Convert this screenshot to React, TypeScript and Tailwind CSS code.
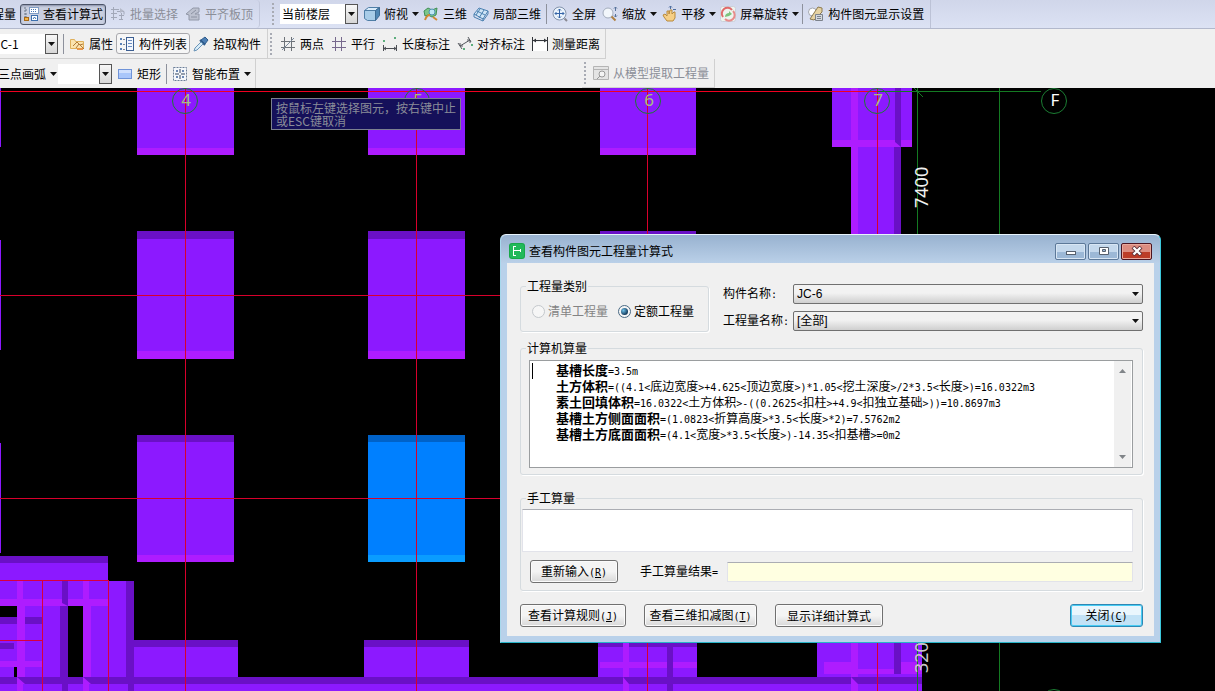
import React from 'react';
import clsx from 'clsx';

type IconProps = { children: React.ReactNode };

const Icon: React.FC<IconProps> = ({ children }) => (
  <svg width="16" height="16" viewBox="0 0 16 16" fill="none" className="shrink-0" aria-hidden="true">
    {children}
  </svg>
);

const icons = {
  formula: (
    <Icon>
      <path d="M2 1v10M2 4h3M2 8h3M2 11h3" stroke="#6b7686" strokeDasharray="2 1" />
      <rect x="6.5" y="1.5" width="9" height="6" fill="#fff" stroke="#7f9cc4" />
      <path d="M8 3.5h1M10 3.5h1M12 3.5h1M8 5.5h1M10 5.5h1M12 5.5h1" stroke="#4a78b8" />
      <rect x="1.5" y="11.5" width="4" height="3" fill="#f4b54a" stroke="#a86a18" />
      <rect x="8.5" y="9.5" width="6" height="5" fill="#fff" stroke="#3c6fae" />
      <path d="M10 13l1.5-2 1.5 2" stroke="#3c6fae" />
    </Icon>
  ),
  batch: (
    <Icon>
      <path d="M1 3.5h8M1 7.5h6M1 11.5h6M3.5 1v13M7 5.5h7v3M9 9.5h5M11.5 7v7M9 13.5h4" stroke="#a2a8b8" />
      <path d="M10 2l4 3-4 2z" fill="#b4b9c8" />
    </Icon>
  ),
  alignTop: (
    <Icon>
      <path d="M1 8l7-6h6v4l-4 2h4v6H4V9z" fill="#bcc1cf" stroke="#9298a8" />
      <path d="M6 8l5-4M6 11h6" stroke="#8c92a2" />
    </Icon>
  ),
  cube: (
    <Icon>
      <path d="M.5 4.5l4-3h11l-4 3z" fill="#d8ebfa" stroke="#4f7ea6" />
      <path d="M.5 4.5h11v10h-8l-3-2z" fill="#a8cce8" stroke="#4f7ea6" />
      <path d="M11.5 4.5l4-3v8l-4 5z" fill="#4f86b4" stroke="#3e6c94" />
    </Icon>
  ),
  orbit: (
    <Icon>
      <path d="M1 5l4-3 4 2 5-2-1 7-4 2-4-2-3 1z" fill="#7cc68a" stroke="#3f8f56" />
      <circle cx="9" cy="6" r="3" fill="#bfe6f4" stroke="#4d92ac" />
      <path d="M2 14c1-3 3-5 5-5M10 11l4 3" stroke="#d08a32" strokeWidth="2" />
    </Icon>
  ),
  partial: (
    <Icon>
      <path d="M1 8l5-6 9 3-5 8z" fill="#cfe4f6" stroke="#4a80b0" />
      <path d="M4 5l8 4M7 3l-4 6M11 4l-5 8M1 8v3l9 4v-3M10 15l5-7V5" stroke="#4a80b0" />
    </Icon>
  ),
  fullscreen: (
    <Icon>
      <circle cx="7.5" cy="7.5" r="6.5" fill="#eaf3fc" stroke="#8494ac" />
      <path d="M7.5 3v9M3 7.5h9M6 4.5l1.5-1.5L9 4.5M6 10.5L7.5 12 9 10.5M4.5 6L3 7.5 4.5 9M10.5 6L12 7.5 10.5 9" stroke="#3565a8" />
      <path d="M12.5 12.5L15 15" stroke="#8a8a92" strokeWidth="2" />
    </Icon>
  ),
  zoom: (
    <Icon>
      <circle cx="6" cy="7" r="5" fill="#f2f6fb" stroke="#a4adbd" />
      <path d="M9.5 10.5l4 4" stroke="#b08040" strokeWidth="2" />
      <path d="M13.5 1v4M12 2.5L13.5 1 15 2.5M13.5 8v3M12 9.5l1.5 1.5L15 9.5" stroke="#58739a" />
    </Icon>
  ),
  pan: (
    <Icon>
      <path d="M2 9l2-1 2 2V5h2v3l1-4h2v4l2-2h1v6l-2 3H6l-3-4z" fill="#f6cf86" stroke="#b98a3c" />
      <path d="M9.5 0v3M8 1.5L9.5 0 11 1.5M12 3.5h3" stroke="#4f6fa0" />
    </Icon>
  ),
  rotate: (
    <Icon>
      <rect x=".5" y=".5" width="15" height="15" rx="2" fill="#eef4ee" stroke="#ccd0da" />
      <path d="M3 11a5.500 5.500 0 0 1 9-7" stroke="#e06a6a" strokeWidth="2" />
      <path d="M13 5a5.500 5.500 0 0 1-8 8" stroke="#e88c8c" strokeWidth="2" />
      <path d="M5 11c0-3 2-4 4-4V5l3 3-3 2" fill="#7cc47c" />
    </Icon>
  ),
  display: (
    <Icon>
      <circle cx="4.500" cy="6" r="4" fill="#fff" stroke="#a4a8b0" />
      <path d="M2 13l8-12 4 1v4l-8 8z" fill="#e6d2a2" stroke="#8c7a50" />
      <path d="M7.500 14.500v-6h7v6z" fill="#d4d8de" stroke="#7c828c" />
      <path d="M9 10.500h4M9 12.500h4" stroke="#7c828c" />
    </Icon>
  ),
  property: (
    <Icon>
      <path d="M1.500 3.500h4l1 2h8v7h-13z" fill="#fbe3ae" stroke="#dfb05c" />
      <path d="M4 10l4-4 3 3 3-1M7 12l3-4 5 5" stroke="#b07a3a" />
      <path d="M8 13h6" stroke="#e8964a" strokeWidth="2" />
    </Icon>
  ),
  list: (
    <Icon>
      <path d="M1 2h2v2H1zM1 7h2v2H1zM1 12h2v2H1z" fill="#5a82b8" />
      <path d="M4 3.500h2M4 8.500h2M4 13.500h2" stroke="#7a8798" />
      <rect x="7.500" y="1.500" width="7" height="13" fill="#f4f8fd" stroke="#3d5f92" />
      <path d="M9 4.500h4M9 7.500h4M9 10.500h4" stroke="#6b8cc0" />
    </Icon>
  ),
  picker: (
    <Icon>
      <path d="M8 4l4-3 3 3-3 4z" fill="#4d7fb4" stroke="#2f5c8c" />
      <path d="M7 4l5 5" stroke="#2f5c8c" strokeWidth="2" />
      <path d="M8 6l-6 6-1 3 3-1 6-6z" fill="#d8ecf8" stroke="#6a94b8" />
    </Icon>
  ),
  twoPoint: (
    <Icon>
      <path d="M4.500 1v14M11.500 1v14M1 5.500h14M1 11.500h14" stroke="#6d7278" />
      <path d="M2 14L14 2" stroke="#7a8a9c" />
    </Icon>
  ),
  parallel: (
    <Icon>
      <path d="M4.500 1v14M10.500 1v14M1 5.500h14M1 11.500h14" stroke="#76688c" />
    </Icon>
  ),
  length: (
    <Icon>
      <path d="M1.500 9v6M14.500 9v6M2 12.500h12M4 11l-2 1.500L4 14M12 11l2 1.500-2 1.500" stroke="#4c4f55" />
      <path d="M1 4h2v2H1zM12 1h2v2h-2z" fill="#5cae7c" />
    </Icon>
  ),
  aligned: (
    <Icon>
      <path d="M1 7l4 6M11 1l3 5M3 10l10-6M3 7v3h3M10 4h3v3" stroke="#55585e" />
      <path d="M6 12h2v2H6zM14 8h2v2h-2z" fill="#5cae7c" />
    </Icon>
  ),
  measure: (
    <Icon>
      <path d="M1 6h14v9H1z" fill="#fff" />
      <path d="M.500 1v14M15.500 1v14M1 4.500h14" stroke="#33363b" />
      <path d="M1 4.500l3-2v4zM15 4.500l-3-2v4z" fill="#33363b" />
    </Icon>
  ),
  rect: (
    <Icon>
      <rect x="1.500" y="3.500" width="13" height="9" fill="#a9c6fa" stroke="#6f93d8" />
      <path d="M2 4h12v3H2z" fill="#cfdffd" />
    </Icon>
  ),
  smart: (
    <Icon>
      <rect x="1.500" y="1.500" width="13" height="13" fill="#f4f7fb" stroke="#6c7f98" strokeDasharray="2 1" />
      <path d="M8 3v4M8 9v4M3 8h4M9 8h4" stroke="#34445c" />
      <path d="M4 4h2v2H4zM10 4h2v2h-2zM4 10h2v2H4zM10 10h2v2h-2z" fill="#6c88b4" />
    </Icon>
  ),
  extract: (
    <Icon>
      <path d="M.500 1.500h15v13H.500z" fill="#e4e4e4" stroke="#b4b4b4" />
      <path d="M1 4.500h14" stroke="#b4b4b4" />
      <circle cx="9" cy="9" r="3" fill="#f4f4f4" stroke="#999" />
      <path d="M7 11l-3 3" stroke="#999" />
    </Icon>
  ),
};

const Caret: React.FC = () => (
  <svg width="7" height="4" viewBox="0 0 7 4" className="shrink-0" aria-hidden="true">
    <path d="M0 0h7L3.5 4z" fill="#111" />
  </svg>
);

interface ToolProps {
  icon?: React.ReactNode;
  label: string;
  caret?: boolean;
  disabled?: boolean;
  look?: 'plain' | 'pressed' | 'outlined';
}

const Tool: React.FC<ToolProps> = ({ icon, label, caret, disabled, look = 'plain' }) => (
  <button
    type="button"
    disabled={disabled}
    className={clsx(
      'flex h-[21px] shrink-0 items-center gap-1 rounded-[3px] border pl-[2px] whitespace-nowrap disabled:text-[#8b8e98]',
      caret ? 'pr-0' : 'pr-[2px]',
      look === 'plain' && 'border-transparent',
      look === 'pressed' && 'border-[#4c5468] bg-[#c9cfe0] shadow-[inset_0_1px_2px_#8890a8]',
      look === 'outlined' && 'border-[#a9a9ad] bg-[#f6f6f6]'
    )}
  >
    {icon}
    <span>{label}</span>
    {caret && <Caret />}
  </button>
);

const Separator: React.FC = () => <span className="mx-[2px] h-[20px] w-px shrink-0 bg-[#8d919c]" />;

const Grip: React.FC = () => (
  <span className="mr-1 ml-[2px] h-[22px] w-[2px] shrink-0 bg-[repeating-linear-gradient(#a8abb4_0_2px,transparent_2px_4px)]" />
);

const ToolSelect: React.FC<{ label: string; value: string; className: string }> = ({ label, value, className }) => (
  <div className={clsx('relative flex h-[20px] shrink-0 justify-end overflow-hidden bg-white', className)}>
    <select aria-label={label} className="h-full w-full shrink-0 appearance-none bg-white px-[2px] outline-none">
      <option>{value}</option>
    </select>
    <span className="pointer-events-none absolute inset-y-0 right-0 flex w-[13px] items-center justify-center border border-[#555] bg-linear-to-b from-[#f8f8f8] to-[#d6d6d6]">
      <Caret />
    </span>
  </div>
);

const Toolbars: React.FC = () => (
  <header className="bg-[#f0f0f0]">
    <div className="flex h-[29px] overflow-hidden border-b border-[#b2b8cc] bg-linear-to-b from-[#d0d6ea] to-[#dce2f4]">
      <div className="flex items-center gap-px rounded-r border-r border-[#c2c8dc] pr-[3px]">
        <button type="button" className="mr-[3px] flex w-4 shrink-0 justify-end overflow-hidden whitespace-nowrap">
          <span className="shrink-0">工程量</span>
        </button>
        <Tool icon={icons.formula} label="查看计算式" look="pressed" />
        <Tool icon={icons.batch} label="批量选择" disabled />
        <Tool icon={icons.alignTop} label="平齐板顶" disabled />
      </div>
      <div className="ml-[10px] flex items-center border-r border-[#bcc2d6] pr-[3px]">
        <Grip />
        <ToolSelect label="楼层范围" value="当前楼层" className="mr-[3px] ml-[2px] w-[78px]" />
        <Tool icon={icons.cube} label="俯视" caret />
        <Tool icon={icons.orbit} label="三维" />
        <Tool icon={icons.partial} label="局部三维" />
        <Separator />
        <Tool icon={icons.fullscreen} label="全屏" />
        <Tool icon={icons.zoom} label="缩放" caret />
        <Tool icon={icons.pan} label="平移" caret />
        <Tool icon={icons.rotate} label="屏幕旋转" caret />
        <Separator />
        <Tool icon={icons.display} label="构件图元显示设置" />
      </div>
    </div>
    <div className="flex h-[30px] overflow-hidden">
      <div className="flex items-center border-r border-b border-[#d0d0d0] pr-[3px]">
        <div className="mr-[3px] flex w-[58px] shrink-0 justify-end overflow-hidden">
          <ToolSelect label="构件" value="JC-1" className="w-[66px]" />
        </div>
        <Separator />
        <Tool icon={icons.property} label="属性" />
        <Tool icon={icons.list} label="构件列表" look="outlined" />
        <Tool icon={icons.picker} label="拾取构件" />
      </div>
      <div className="flex items-center gap-px border-r border-b border-[#d0d0d0] pr-[2px]">
        <Grip />
        <Tool icon={icons.twoPoint} label="两点" />
        <Tool icon={icons.parallel} label="平行" />
        <Tool icon={icons.length} label="长度标注" />
        <Tool icon={icons.aligned} label="对齐标注" />
        <Tool icon={icons.measure} label="测量距离" />
      </div>
    </div>
    <div className="flex h-[29px] overflow-hidden">
      <div className="flex items-center border-r border-[#d0d0d0] pr-[3px]">
        <div className="flex w-[58px] shrink-0 justify-end overflow-hidden">
          <Tool label="三点画弧" caret />
        </div>
        <ToolSelect label="画弧方式" value="" className="mr-[2px] w-[54px]" />
        <Tool icon={icons.rect} label="矩形" />
        <Separator />
        <Tool icon={icons.smart} label="智能布置" caret />
      </div>
      <div className="ml-[326px] flex items-center border-r border-b border-[#d0d0d0] pr-[2px]">
        <Grip />
        <Tool icon={icons.extract} label="从模型提取工程量" disabled />
      </div>
    </div>
  </header>
);

const BODY = '#8c19ff';
const DARK = '#6a10c6';
const LIGHT = '#ae1cff';

// x, y, width, height, fill
type Block = [number, number, number, number, string];

const blocks: Block[] = [
  // slivers cut off by the left edge
  [0, 88, 1, 59, BODY],
  [0, 240, 1, 110, BODY],
  [0, 443, 1, 110, BODY],
  // top row
  [137, 88, 97, 67, BODY],
  [137, 148, 97, 7, LIGHT],
  [368, 88, 97, 67, BODY],
  [368, 148, 97, 7, LIGHT],
  [600, 88, 96, 67, BODY],
  [600, 148, 96, 7, LIGHT],
  // second row
  [137, 231, 97, 128, BODY],
  [137, 231, 97, 8, DARK],
  [137, 351, 97, 8, LIGHT],
  [368, 231, 97, 128, BODY],
  [368, 231, 97, 8, DARK],
  [368, 351, 97, 8, LIGHT],
  [600, 231, 96, 128, DARK],
  // third row
  [137, 435, 97, 127, BODY],
  [137, 435, 97, 7, DARK],
  [137, 555, 97, 7, LIGHT],
  [368, 435, 97, 127, '#0080ff'],
  [368, 435, 97, 7, '#0062c8'],
  [368, 555, 97, 7, '#0a9cff'],
  // axis 7
  [832, 88, 80, 59, BODY],
  [832, 140, 80, 7, LIGHT],
  [851, 147, 50, 90, BODY],
  [851, 88, 7, 149, LIGHT],
  [895, 88, 6, 54, DARK],
  [894, 147, 7, 90, DARK],
  // bottom left cluster
  [0, 556, 108, 25, BODY],
  [0, 556, 108, 7, DARK],
  [0, 581, 134, 110, BODY],
  [126, 581, 8, 110, DARK],
  [134, 640, 104, 51, BODY],
  [134, 640, 104, 7, DARK],
  [364, 640, 105, 51, BODY],
  [364, 640, 105, 7, DARK],
  [598, 640, 99, 51, BODY],
  [598, 640, 99, 7, DARK],
  [817, 640, 105, 51, BODY],
  [0, 677, 922, 14, BODY],
  [0, 677, 922, 7, DARK],
  [0, 599, 108, 7, LIGHT],
  [62, 581, 6, 22, DARK],
  [68, 606, 15, 71, '#000'],
  [60, 606, 8, 71, DARK],
  [62, 677, 6, 14, DARK],
  [0, 606, 17, 11, '#000'],
  [0, 617, 42, 7, DARK],
  [0, 643, 14, 6, DARK],
  [0, 661, 42, 6, LIGHT],
  [14, 667, 3, 10, '#000'],
  [17, 581, 6, 25, LIGHT],
  [17, 606, 8, 71, LIGHT],
  [17, 684, 6, 7, LIGHT],
  [83, 581, 6, 25, LIGHT],
  [83, 606, 8, 71, LIGHT],
  [83, 684, 6, 7, LIGHT],
  [128, 677, 6, 14, DARK],
  // bottom of axis 6 and 7
  [600, 662, 97, 6, LIGHT],
  [623, 643, 6, 34, LIGHT],
  [623, 684, 6, 7, LIGHT],
  [667, 647, 6, 44, DARK],
  [824, 662, 98, 12, LIGHT],
  [858, 662, 36, 7, BODY],
  [851, 643, 7, 34, LIGHT],
  [851, 684, 7, 7, LIGHT],
  [894, 643, 7, 31, DARK],
];

const gridLines: Block[] = [
  [0, 91, 877, 1, '#f00020'],
  [0, 295, 500, 1, '#d8002c'],
  [0, 498, 500, 1, '#d8002c'],
  [185, 88, 1, 603, '#d8002c'],
  [416, 88, 1, 603, '#d8002c'],
  [647, 88, 1, 603, '#d8002c'],
  [877, 88, 1, 603, '#d8002c'],
  [0, 580, 109, 1, '#d8003c'],
  [0, 640, 43, 1, '#d8003c'],
  [42, 581, 1, 110, '#d8003c'],
  [108, 581, 1, 110, '#d8003c'],
  [877, 91, 164, 1, '#147a22'],
  [917, 88, 1, 603, '#147a22'],
  [999, 88, 1, 603, '#147a22'],
];

const axes = [
  { x: 185, label: '4', color: '#a8c07c' },
  { x: 417, label: '5', color: '#a8c07c' },
  { x: 648, label: '6', color: '#a8c07c' },
  { x: 877, label: '7', color: '#a8c07c' },
  { x: 1054, label: 'F', color: '#ffffff' },
];

const Drawing: React.FC = () => (
  <svg className="absolute inset-0 h-full w-full font-['Noto_Sans',sans-serif]" aria-label="基础平面图">
    {/* plan coordinates are measured from the window top */}
    <g transform="translate(0 -88)">
      {blocks.map(([x, y, w, h, fill], i) => (
        <rect key={i} x={x} y={y} width={w} height={h} fill={fill} />
      ))}
      <path d="M895 142h6v5zM62 603h6v3zM667 668h6v-6z" fill={DARK} />
      <path d="M17 677l8 7h-8zM83 677l8 7h-8zM17 617l8 7h-8zM623 677l6 7h-6zM851 677l7 7h-7z" fill={LIGHT} />
      {gridLines.map(([x, y, w, h, fill], i) => (
        <rect key={i} x={x} y={y} width={w} height={h} fill={fill} />
      ))}
      <path d="M914 88l9 9" stroke="#147a22" />
      {axes.map((axis) => (
        <g key={axis.label}>
          <circle cx={axis.x} cy="101" r="12.5" fill="none" stroke="#1b7d33" />
          <text x={axis.x + 1} y="106" fontSize="17" textAnchor="middle" fill={axis.color}>
            {axis.label}
          </text>
        </g>
      ))}
      <circle cx="1054" cy="702" r="12.5" fill="none" stroke="#1b7d33" />
      <text transform="translate(928 208) rotate(-90)" fontSize="18" fill="#f0f0f0">
        7400
      </text>
      <text transform="translate(928 673) rotate(-90)" fontSize="18" fill="#c8c8c8">
        3200
      </text>
    </g>
  </svg>
);

// Half-width characters take half the width of a 12px ideograph
const Mixed: React.FC<{ text: string }> = ({ text }) => (
  <>
    {text.split(/([\x20-\x7e]+)/).map((run, i) =>
      i % 2 ? (
        <span key={i} className="font-['DejaVu_Sans_Mono',monospace] text-[10px] whitespace-pre">
          {run}
        </span>
      ) : (
        run
      )
    )}
  </>
);

interface DialogButtonProps {
  label: string;
  hotkey?: string;
  className: string;
  primary?: boolean;
}

const DialogButton: React.FC<DialogButtonProps> = ({ label, hotkey, className, primary }) => (
  <button
    type="button"
    className={clsx(
      'h-[23px] shrink-0 rounded-[3px] border whitespace-nowrap',
      primary
        ? 'border-[#2f87b4] bg-linear-to-b from-[#eaf6fd] from-50% to-[#c2e2f6] to-50% shadow-[inset_0_0_0_1px_#48cdf4]'
        : 'border-[#707070] bg-linear-to-b from-[#f4f4f4] from-50% to-[#d8d8d8] shadow-[inset_0_0_0_1px_#fbfbfb]',
      className
    )}
  >
    {label}
    {hotkey && (
      <span className="font-['DejaVu_Sans_Mono',monospace] text-[10px]">
        (<u>{hotkey}</u>)
      </span>
    )}
  </button>
);

const FieldSelect: React.FC<{ id: string; label: string; value: string }> = ({ id, label, value }) => (
  <div className="flex items-center">
    <label htmlFor={id} className="w-[70px] shrink-0 whitespace-nowrap">
      <Mixed text={label} />
    </label>
    <div className="relative flex-1">
      <select
        id={id}
        className="block h-[20px] w-full appearance-none rounded-[2px] border border-[#707070] bg-linear-to-b from-[#f2f2f2] from-45% to-[#cfcfcf] pl-[3px] font-['Liberation_Sans','Noto_Sans_CJK_SC',sans-serif] outline-none"
      >
        <option>{value}</option>
      </select>
      <span className="pointer-events-none absolute inset-y-0 right-1 flex items-center">
        <Caret />
      </span>
    </div>
  </div>
);

interface GroupProps {
  title: string;
  className?: string;
  bodyClassName: string;
  children: React.ReactNode;
}

const Group: React.FC<GroupProps> = ({ title, className, bodyClassName, children }) => (
  <fieldset className={clsx('min-w-0 rounded-[3px] border border-[#d5dbdf] shadow-[1px_1px_0_#fff]', className)}>
    <legend className="ml-[5px] px-px leading-4">{title}</legend>
    <div className={bodyClassName}>{children}</div>
  </fieldset>
);

const results = [
  { name: '基槽长度', value: '=3.5m' },
  { name: '土方体积', value: '=((4.1<底边宽度>+4.625<顶边宽度>)*1.05<挖土深度>/2*3.5<长度>)=16.0322m3' },
  { name: '素土回填体积', value: '=16.0322<土方体积>-((0.2625<扣柱>+4.9<扣独立基础>))=10.8697m3' },
  { name: '基槽土方侧面面积', value: '=(1.0823<折算高度>*3.5<长度>*2)=7.5762m2' },
  { name: '基槽土方底面面积', value: '=(4.1<宽度>*3.5<长度>)-14.35<扣基槽>=0m2' },
];

const radioClass =
  "grid size-[13px] appearance-none place-items-center rounded-full border border-[#8e8f8f] bg-[#f6f6f6] before:size-[7px] before:rounded-full before:content-[''] checked:border-[#4a6a84] checked:before:bg-[radial-gradient(circle_at_35%_35%,#6fc0e8,#123a5c_70%)] disabled:border-[#c4c8cc]";

const captionButton =
  'flex h-[17px] w-[31px] items-center justify-center rounded-[2px] border bg-linear-to-b from-50% to-50%';

const FormulaDialog: React.FC = () => (
  <div
    role="dialog"
    aria-labelledby="dialog-title"
    className="absolute top-[146px] left-[500px] w-[661px] rounded-t-md border border-t-[#e8f4fc] border-r-[#3cc8dc] border-b-[#28b4c8] border-l-[#a8d8ec] bg-[#b9d1ea] px-[6px] pb-[6px]"
  >
    <div className="-mx-[6px] flex h-[28px] items-center rounded-t-md bg-linear-to-b from-[#98b2d0] to-[#bad0e8] px-2">
      <svg width="16" height="16" viewBox="0 0 16 16" className="mt-1 shrink-0" aria-hidden="true">
        <rect width="16" height="16" rx="3" fill="#18a848" />
        <rect x="1" y="1" width="14" height="14" rx="2" fill="#22b95a" />
        <path d="M4.500 3v10M4 3.500h3M4 12.500h3M5 7.500h6M11.500 6v3" stroke="#fff" fill="none" />
      </svg>
      <h1 id="dialog-title" className="mt-1 ml-1 flex-1">
        查看构件图元工程量计算式
      </h1>
      <div className="mt-1 flex gap-[2px]">
        <button
          type="button"
          aria-label="最小化"
          className={clsx(captionButton, 'border-[#5c7898] from-[#c4d8ec] to-[#9cb8d6] shadow-[inset_0_0_0_1px_#d8e6f4]')}
        >
          <svg width="12" height="10" viewBox="0 0 12 10" aria-hidden="true">
            <rect x="1.5" y="5.5" width="9" height="3" fill="#fff" stroke="#56606e" />
          </svg>
        </button>
        <button
          type="button"
          aria-label="最大化"
          className={clsx(captionButton, 'border-[#5c7898] from-[#c4d8ec] to-[#9cb8d6] shadow-[inset_0_0_0_1px_#d8e6f4]')}
        >
          <svg width="12" height="10" viewBox="0 0 12 10" aria-hidden="true">
            <path d="M1.5 1.5h9v7h-9z" fill="#fff" stroke="#56606e" />
            <path d="M4.5 3.5h3v2h-3z" fill="#9cb8d6" stroke="#56606e" />
          </svg>
        </button>
        <button
          type="button"
          aria-label="关闭"
          className={clsx(captionButton, 'border-[#4c1420] from-[#dc8c80] to-[#bc3c28] shadow-[inset_0_0_0_1px_#e8a89c]')}
        >
          <svg width="12" height="10" viewBox="0 0 12 10" aria-hidden="true">
            <path d="M2 1l8 8M10 1L2 9" stroke="#5c3038" strokeWidth="4" />
            <path d="M2.5 1.5l7 7M9.5 1.5l-7 7" stroke="#fff" strokeWidth="2.4" />
          </svg>
        </button>
      </div>
    </div>

    <div className="bg-[#f0f0f0] pt-[15px] pr-[11px] pb-[9px] pl-[13px]">
      <div className="flex items-start">
        <Group
          title="工程量类别"
          className="shrink-0"
          bodyClassName="flex gap-[10px] pt-[9px] pr-[14px] pb-3 pl-[11px] leading-4"
        >
          <label className="flex items-center gap-[3px] text-[#838383]">
            <input type="radio" name="kind" disabled className={radioClass} />
            清单工程量
          </label>
          <label className="flex items-center gap-[3px]">
            <input type="radio" name="kind" defaultChecked className={radioClass} />
            定额工程量
          </label>
        </Group>
        <div className="mt-[6px] ml-[14px] flex flex-1 flex-col gap-[7px]">
          <FieldSelect id="component" label="构件名称:" value="JC-6" />
          <FieldSelect id="quantity" label="工程量名称:" value="[全部]" />
        </div>
      </div>

      <Group title="计算机算量" className="mt-2" bodyClassName="pt-1 pr-[9px] pb-[6px] pl-2">
        <div className="flex h-[108px] border border-[#9a9d9f] bg-white">
          <div
            role="textbox"
            aria-readonly="true"
            aria-label="计算机算量"
            tabIndex={0}
            className="relative flex-1 pt-px pl-[26px] outline-none"
          >
            <span className="absolute top-[2px] left-[2px] h-4 w-px bg-black" />
            {results.map((row) => (
              <p key={row.name} className="h-4 leading-4 whitespace-nowrap">
                <b className="text-[13px]">{row.name}</b>
                <Mixed text={row.value} />
              </p>
            ))}
          </div>
          <div className="mr-px flex w-[17px] flex-col items-center justify-between bg-[#f0f0f0] py-2">
            <svg width="7" height="4" viewBox="0 0 7 4" aria-hidden="true">
              <path d="M3.5 0L7 4H0z" fill="#808488" />
            </svg>
            <svg width="7" height="4" viewBox="0 0 7 4" aria-hidden="true">
              <path d="M0 0h7L3.5 4z" fill="#808488" />
            </svg>
          </div>
        </div>
      </Group>

      <Group title="手工算量" className="mt-[15px]" bodyClassName="pt-[3px] pr-[9px] pb-[7px] pl-px">
        <textarea
          aria-label="手工算量"
          className="block h-[43px] w-full resize-none border border-[#e2e3ea] border-t-[#abadb3] bg-white p-1 outline-none"
        />
        <div className="mt-2 ml-2 flex items-center">
          <DialogButton label="重新输入" hotkey="R" className="w-[88px]" />
          <label htmlFor="manual-result" className="mr-[9px] ml-[22px] whitespace-nowrap">
            <Mixed text="手工算量结果=" />
          </label>
          <input
            id="manual-result"
            readOnly
            className="h-[20px] min-w-0 flex-1 border border-[#e2e3ea] border-t-[#abadb3] bg-[#ffffe1] px-1 outline-none"
          />
        </div>
      </Group>

      <div className="mt-[13px] flex gap-[18px]">
        <DialogButton label="查看计算规则" hotkey="J" className="w-[106px]" />
        <DialogButton label="查看三维扣减图" hotkey="T" className="w-[113px]" />
        <DialogButton label="显示详细计算式" className="w-[108px]" />
        <DialogButton label="关闭" hotkey="C" className="ml-auto w-[73px]" primary />
      </div>
    </div>
  </div>
);

const App: React.FC = () => {
  return (
    <div className="flex min-h-screen flex-col bg-black font-['Noto_Sans_CJK_SC',sans-serif] text-[12px] leading-4 text-black">
      <Toolbars />
      <main className="relative flex-1 overflow-hidden">
        <Drawing />
        <p className="absolute top-[10px] left-[271px] border border-[#7c8090] bg-[#15105a] px-1 py-[2px] leading-[13px] whitespace-nowrap text-[#8a8c98]">
          按鼠标左键选择图元，按右键中止
          <br />
          或ESC键取消
        </p>
        <FormulaDialog />
      </main>
    </div>
  );
};

export default App;
